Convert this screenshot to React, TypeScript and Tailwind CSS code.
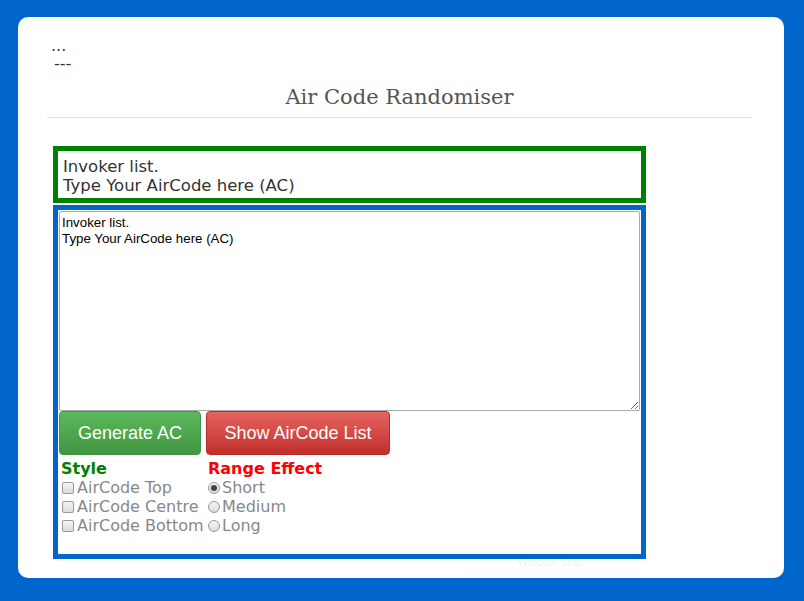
import React from "react";

export default function App() {
  const body = { fontFamily: '"DejaVu Sans", Verdana, sans-serif' };
  return (
    <div className="h-[601px] w-[804px] bg-[#0066cc] pt-[17px] pl-[18px]">
      <div className="relative h-[561px] w-[766px] rounded-[10px] bg-white pl-[29px] pr-[32px] pt-[19px]">
        <div
          className="absolute left-[446px] top-[535px] flex h-[20px] w-[172px] items-center justify-center border border-[#fbfcfc] text-[11px] text-[#f2f2f2]"
          style={{ fontFamily: '"Liberation Sans", Arial, sans-serif' }}
        >
          Window Snip
        </div>
        <div className="pl-[4px] text-[16px] leading-[19px] text-[#333]" style={body}>
          <div>...</div>
          <div className="pl-[3px] leading-[17px]">---</div>
        </div>
        <div
          className="mt-[10px] text-center text-[21px] leading-[30px] text-[#555]"
          style={{ fontFamily: '"DejaVu Serif", Georgia, serif' }}
        >
          Air Code Randomiser
        </div>
        <div className="mt-[5px] h-px bg-[#dddddd]" />
        <div className="ml-[6px] mt-[28px] w-[593px]">
          <div className="h-[57px] border-[5px] border-[#008000] px-[5px] pt-[6px] text-[16.5px] leading-[19px] text-[#333]" style={body}>
            <div>Invoker list.</div>
            <div>Type Your AirCode here (AC)</div>
          </div>
          <div className="relative mt-[2px] h-[354px] border-[5px] border-[#0066cc] pl-[1px] pt-[1px]">
            <textarea
              className="block h-[200px] w-[581px] resize-y rounded-[2px] border border-[#aaaaaa] px-[2px] pt-[3px] text-[13.3px] leading-[16px] text-black outline-none"
              style={{ fontFamily: '"Liberation Sans", Arial, sans-serif' }}
              defaultValue={"Invoker list.\nType Your AirCode here (AC)"}
            />
            <div className="flex gap-[5px]">
              <button
                className="h-[44px] w-[142px] rounded-[4px] border border-[#419641] bg-gradient-to-b from-[#5cb85c] to-[#419641] text-[18px] text-white"
                style={{ fontFamily: '"Liberation Sans", Arial, sans-serif' }}
              >
                Generate AC
              </button>
              <button
                className="h-[44px] w-[184px] rounded-[4px] border border-[#b92c28] bg-gradient-to-b from-[#e56360] to-[#c12e2a] text-[18px] text-white"
                style={{ fontFamily: '"Liberation Sans", Arial, sans-serif' }}
              >
                Show AirCode List
              </button>
            </div>
            <div className="mt-[4px] flex pl-[2px] text-[16px] leading-[19px]" style={body}>
              <div className="w-[147px]">
                <div className="font-bold text-[#008000]">Style</div>
                {["AirCode Top", "AirCode Centre", "AirCode Bottom"].map((t) => (
                  <div key={t} className="flex items-center whitespace-nowrap text-[#888]">
                    <span className="ml-[1px] mr-[3px] inline-block h-[12px] w-[12px] shrink-0 rounded-[2px] border border-[#999] bg-gradient-to-b from-[#f4f4f4] to-[#dcdcdc]" />
                    {t}
                  </div>
                ))}
              </div>
              <div>
                <div className="font-bold text-[#ff0000]">Range Effect</div>
                {["Short", "Medium", "Long"].map((t, i) => (
                  <div key={t} className="flex items-center text-[#888]">
                    <span className="mr-[2px] flex h-[12px] w-[12px] items-center justify-center rounded-full border border-[#999] bg-gradient-to-b from-[#f4f4f4] to-[#dcdcdc]">
                      {i === 0 && <span className="h-[6px] w-[6px] rounded-full bg-[#444]" />}
                    </span>
                    {t}
                  </div>
                ))}
              </div>
            </div>
          </div>
        </div>
      </div>
    </div>
  );
}
